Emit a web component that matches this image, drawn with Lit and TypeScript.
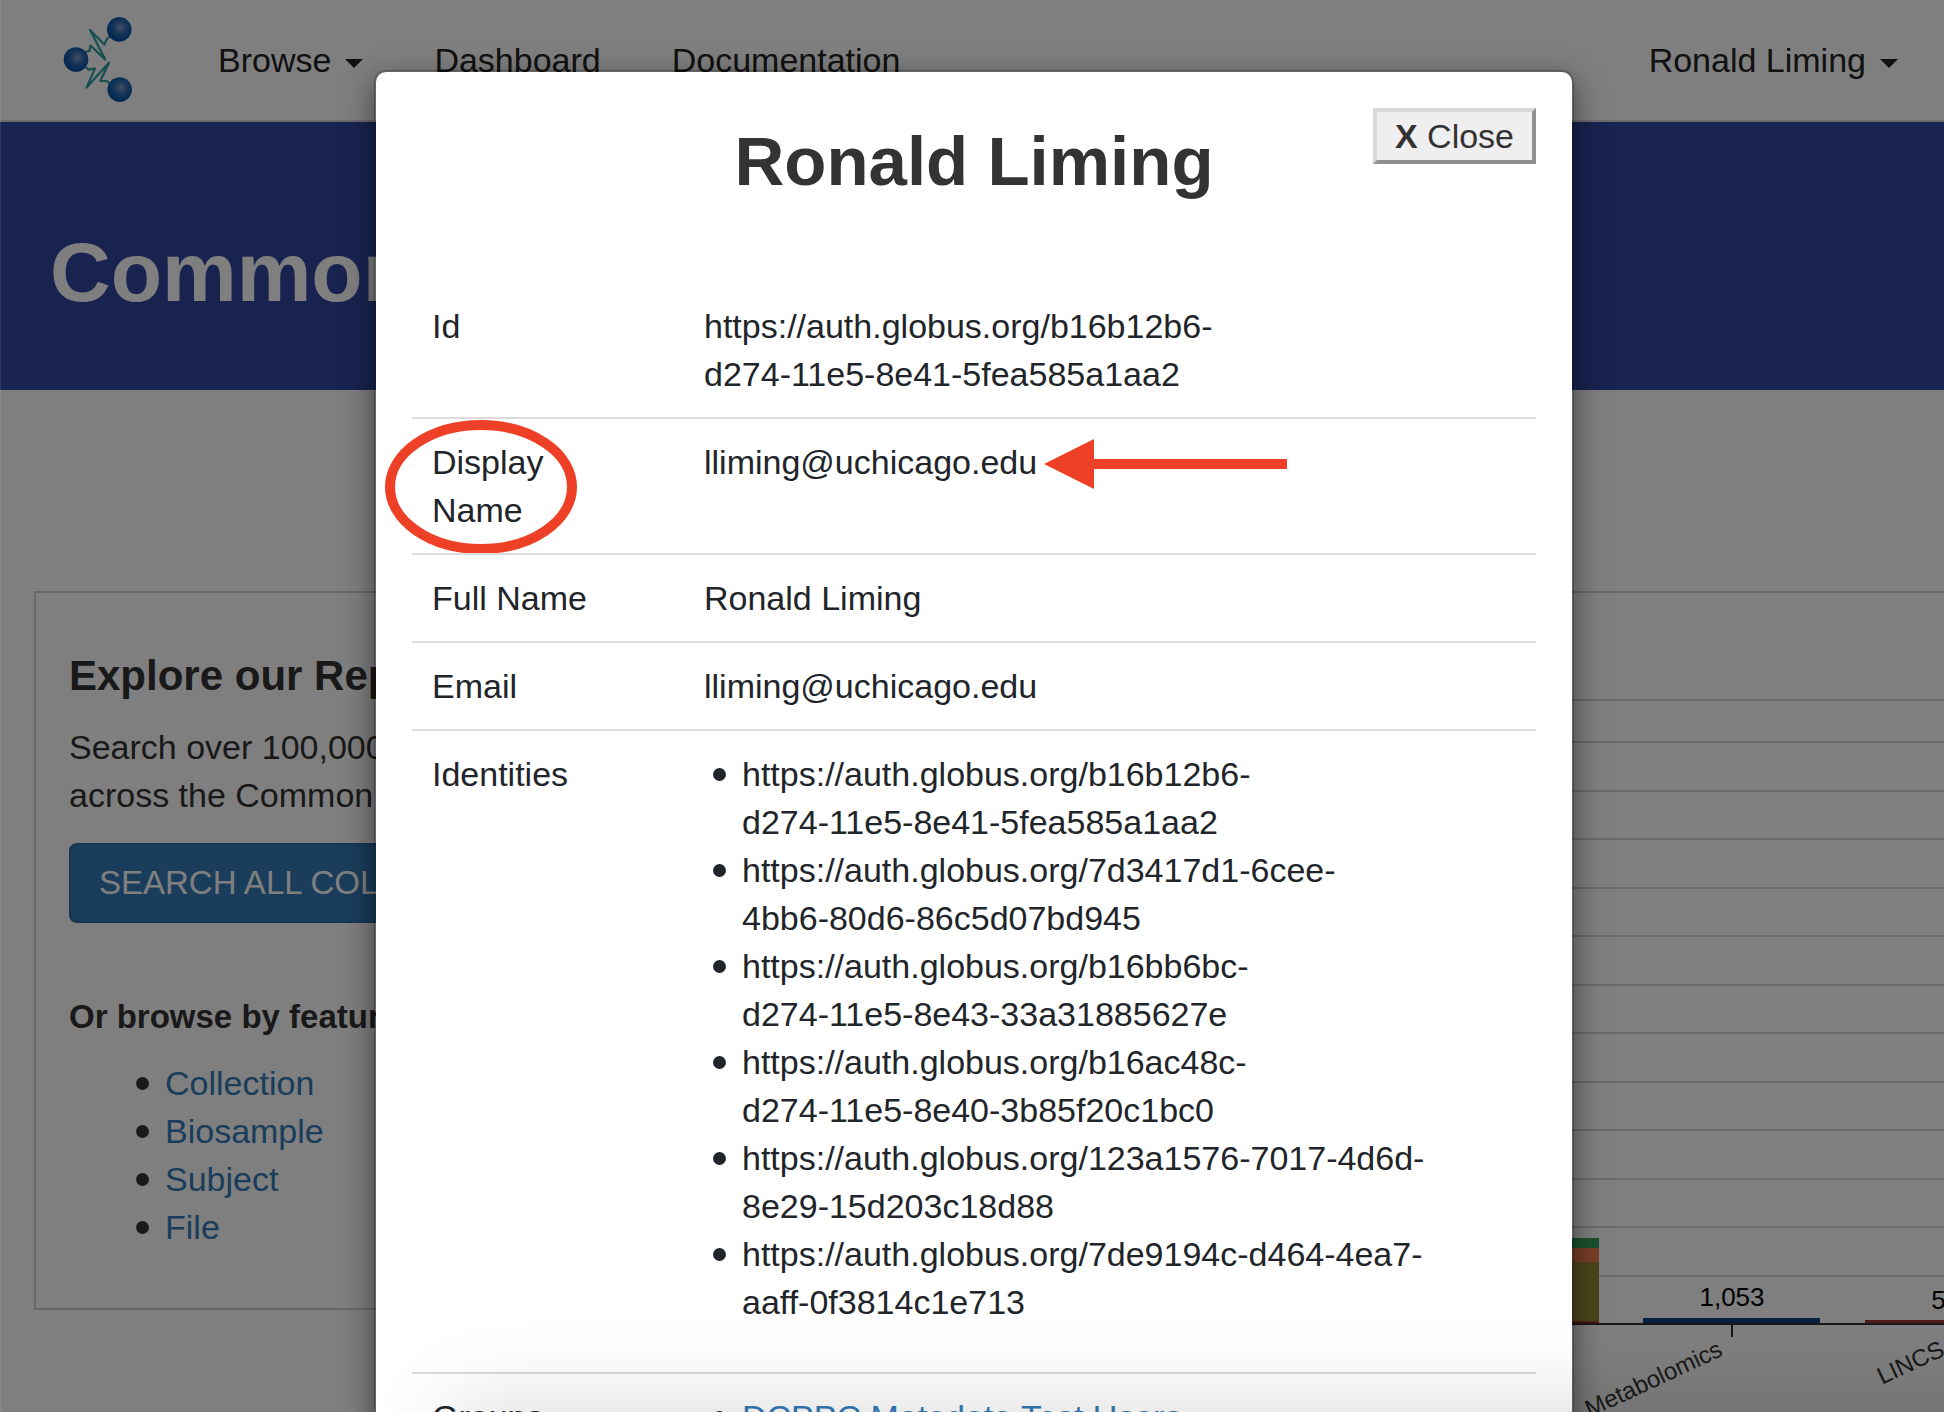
import { LitElement, html, svg, css } from "lit";
import { customElement } from "lit/decorators.js";

const GRID_LINES = [700, 742, 791, 839, 888, 936, 985, 1033, 1082, 1130, 1179, 1227, 1276];

// Each identity URL is shown on two lines, split after the second part.
const IDENTITIES = [
  ["https://auth.globus.org/b16b12b6-", "d274-11e5-8e41-5fea585a1aa2"],
  ["https://auth.globus.org/7d3417d1-6cee-", "4bb6-80d6-86c5d07bd945"],
  ["https://auth.globus.org/b16bb6bc-", "d274-11e5-8e43-33a31885627e"],
  ["https://auth.globus.org/b16ac48c-", "d274-11e5-8e40-3b85f20c1bc0"],
  ["https://auth.globus.org/123a1576-7017-4d6d-", "8e29-15d203c18d88"],
  ["https://auth.globus.org/7de9194c-d464-4ea7-", "aaff-0f3814c1e713"],
];

const FEATURES = ["Collection", "Biosample", "Subject", "File"];

const bulletStyles = css`
  .list {
    list-style: none;
    margin: 0;
    padding: 0;
  }
  .entry {
    display: flex;
    gap: 16px;
  }
  .entry::before {
    content: "";
    flex: none;
    width: 13px;
    height: 13px;
    margin-top: 18px;
    border-radius: 50%;
    background: currentColor;
  }
  .link {
    color: #337ab7;
    text-decoration: none;
  }
`;

@customElement("site-nav")
class SiteNav extends LitElement {
  static styles = css`
    :host {
      display: block;
    }
    .bar {
      display: flex;
      align-items: center;
      gap: 71px;
      height: 120px;
      padding: 0 46px 0 60px;
      background: #fff;
      border-bottom: 2px solid #d8d8d8;
    }
    .logo {
      display: block;
      margin-right: 11px;
    }
    .item {
      display: flex;
      align-items: center;
      gap: 14px;
      padding: 0;
      border: 0;
      background: none;
      color: #222;
      font: inherit;
      text-decoration: none;
      cursor: pointer;
    }
    .user {
      margin-left: auto;
    }
    .caret {
      margin-top: 6px;
      border: 9px solid transparent;
      border-top-color: #222;
      border-bottom: 0;
    }
  `;

  render() {
    return html`
      <nav class="bar" aria-label="Main">
        <a class="logo" href="#" aria-label="Home">
          <svg width="76" height="90" viewBox="60 15 76 90" style="display:block">
            <defs>
              <radialGradient id="ball" cx="0.55" cy="0.42" r="0.6">
                <stop offset="0" stop-color="#7f9fc8" />
                <stop offset="0.45" stop-color="#2f68ad" />
                <stop offset="0.8" stop-color="#0c57a8" />
                <stop offset="1" stop-color="#084a92" />
              </radialGradient>
            </defs>
            <g fill="none" stroke="#2f9ca0" stroke-width="2.2" stroke-linejoin="round" stroke-linecap="round">
              <path d="M86 52 L89.5 50.7 L90.5 45.5 L105.3 59.6 L90 30 L104.3 44.6 L106.8 39 L110 36.6" />
              <path d="M86.3 67.6 L88.6 69.6 L95 68.4 L86.6 87.6 L109 62.7 L100.3 81 L106.6 81 L109.5 83.4" />
            </g>
            <circle cx="119.3" cy="29.4" r="12.3" fill="url(#ball)" />
            <circle cx="76" cy="59.5" r="12.3" fill="url(#ball)" />
            <circle cx="119.7" cy="89.6" r="12.3" fill="url(#ball)" />
          </svg>
        </a>
        <button class="item" type="button">Browse <span class="caret"></span></button>
        <a class="item" href="#">Dashboard</a>
        <a class="item" href="#">Documentation</a>
        <button class="item user" type="button">Ronald Liming <span class="caret"></span></button>
      </nav>
    `;
  }
}

@customElement("explore-card")
class ExploreCard extends LitElement {
  static styles = [
    bulletStyles,
    css`
      :host {
        display: block;
      }
      .card {
        padding: 59px 33px 57px;
        border: 2px solid #d0d0d0;
        color: #333;
      }
      .heading {
        margin: 0 0 23px;
        font-size: 42px;
        line-height: 48px;
        white-space: nowrap;
      }
      .text {
        margin: 0 0 24px;
      }
      .search {
        display: inline-block;
        padding: 14px 28px;
        border: 2px solid #2e6da4;
        border-radius: 8px;
        background: #337ab7;
        color: #fff;
        font-size: 33px;
        line-height: 48px;
        text-decoration: none;
        white-space: nowrap;
      }
      .subheading {
        margin: 70px 0 18px;
        font-size: 33px;
        line-height: 48px;
        white-space: nowrap;
      }
      .features {
        padding-left: 67px;
      }
    `,
  ];

  render() {
    return html`
      <section class="card">
        <h2 class="heading">Explore our Repository</h2>
        <p class="text">Search over 100,000 files<br />across the Common Fund</p>
        <a class="search" href="#">SEARCH ALL COLLECTIONS</a>
        <h3 class="subheading">Or browse by feature:</h3>
        <ul class="list features">
          ${FEATURES.map((name) => html`<li class="entry"><a class="link" href="#">${name}</a></li>`)}
        </ul>
      </section>
    `;
  }
}

@customElement("summary-chart")
class SummaryChart extends LitElement {
  static styles = css`
    :host {
      display: flex;
      justify-content: flex-end;
      border: 2px solid #d0d0d0;
      border-right: 0;
      overflow: hidden;
    }
    .plot {
      display: block;
      flex: none;
    }
    .grid {
      stroke: #d4d4d4;
      stroke-width: 2;
    }
    .axis {
      stroke: #333;
      stroke-width: 2;
    }
    .value {
      fill: #000;
      font-size: 26px;
      text-anchor: middle;
    }
    .name {
      fill: #333;
      font-size: 24px;
      text-anchor: end;
    }
  `;

  render() {
    return html`
      <svg class="plot" width="600" height="860" viewBox="1344 593 600 860" role="img" aria-label="Counts by program">
        ${GRID_LINES.map((y) => svg`<line class="grid" x1="1344" x2="1944" y1=${y} y2=${y} />`)}
        <rect x="1424" y="1238" width="175" height="10" fill="#32a25a" />
        <rect x="1424" y="1248" width="175" height="14" fill="#f07c50" />
        <rect x="1424" y="1262" width="175" height="59" fill="#988a34" />
        <rect x="1424" y="1321" width="175" height="3" fill="#a03030" />
        <rect x="1643" y="1318" width="177" height="6" fill="#0a4080" />
        <rect x="1865" y="1320" width="177" height="4" fill="#a83232" />
        <line class="axis" x1="1344" x2="1944" y1="1324" y2="1324" />
        <line class="axis" x1="1732" x2="1732" y1="1324" y2="1337" />
        <text class="value" x="1732" y="1306">1,053</text>
        <text class="value" x="1953" y="1309">569</text>
        <text class="name" transform="translate(1724 1355) rotate(-25)">Metabolomics</text>
        <text class="name" transform="translate(1946 1355) rotate(-25)">LINCS</text>
      </svg>
    `;
  }
}

@customElement("profile-dialog")
class ProfileDialog extends LitElement {
  static styles = [
    bulletStyles,
    css`
      :host {
        display: block;
      }
      .dialog {
        box-sizing: border-box;
        width: 100%;
        padding: 36px;
        border: 2px solid rgba(0, 0, 0, 0.2);
        border-radius: 12px;
        background: #fff;
        background-clip: padding-box;
        box-shadow: 0 10px 30px rgba(0, 0, 0, 0.5);
        color: #212529;
      }
      .header {
        display: grid;
        grid-template-columns: 1fr auto 1fr;
        margin-bottom: 81px;
        color: #333;
      }
      .title {
        grid-column: 2;
        margin: 14px 0 0;
        font-size: 69px;
        line-height: 80px;
      }
      .close {
        align-self: start;
        justify-self: end;
        padding: 0 18px;
        border: 4px solid;
        border-color: #d8d8d8 #909090 #909090 #d8d8d8;
        background: #efefef;
        color: #333;
        font: inherit;
        font-size: 34px;
        line-height: 48px;
      }
      .fields {
        width: 100%;
        border-collapse: separate;
        border-spacing: 0;
        table-layout: fixed;
      }
      .label,
      .value {
        position: relative;
        padding: 19px 20px;
        border-top: 2px solid #dcdcdc;
        font-weight: normal;
        text-align: left;
        vertical-align: top;
      }
      .label {
        width: 172px;
        padding-right: 80px;
      }
      .first > .label,
      .first > .value {
        border-top: 0;
      }
      .entries {
        margin-bottom: 27px;
        padding-left: 9px;
      }
      .mark {
        position: absolute;
        pointer-events: none;
      }
      .oval {
        top: 0;
        left: -28px;
      }
      .arrow {
        top: 20px;
        left: 360px;
      }
    `,
  ];

  render() {
    return html`
      <div class="dialog" role="dialog" aria-labelledby="title">
        <div class="header">
          <h1 class="title" id="title">Ronald Liming</h1>
          <button class="close" type="button"><b>X</b> Close</button>
        </div>
        <table class="fields">
          <tr class="first">
            <th class="label" scope="row">Id</th>
            <td class="value">${IDENTITIES[0][0]}<br />${IDENTITIES[0][1]}</td>
          </tr>
          <tr>
            <th class="label" scope="row">
              Display Name
              <svg class="mark oval" width="194" height="136" viewBox="0 0 194 136">
                <ellipse cx="97" cy="68" rx="91" ry="62" fill="none" stroke="#ee4026" stroke-width="10" />
              </svg>
            </th>
            <td class="value">
              lliming@uchicago.edu
              <svg class="mark arrow" width="244" height="50" viewBox="0 0 244 50">
                <path d="M0 25 L50 0 V20 H243 V30 H50 V50 Z" fill="#ee4026" />
              </svg>
            </td>
          </tr>
          <tr>
            <th class="label" scope="row">Full Name</th>
            <td class="value">Ronald Liming</td>
          </tr>
          <tr>
            <th class="label" scope="row">Email</th>
            <td class="value">lliming@uchicago.edu</td>
          </tr>
          <tr>
            <th class="label" scope="row">Identities</th>
            <td class="value">
              <ul class="list entries">
                ${IDENTITIES.map(
                  ([start, end]) => html`<li class="entry"><span>${start}<br />${end}</span></li>`,
                )}
              </ul>
            </td>
          </tr>
          <tr>
            <th class="label" scope="row">Groups</th>
            <td class="value">
              <ul class="list entries">
                <li class="entry"><a class="link" href="#">DCPPC Metadata Test Users</a></li>
              </ul>
            </td>
          </tr>
        </table>
      </div>
    `;
  }
}

@customElement("app-root")
class AppRoot extends LitElement {
  static styles = css`
    :host {
      display: block;
      font-family: "Liberation Sans", Arial, sans-serif;
      font-size: 34px;
      line-height: 48px;
    }
    .screen {
      position: relative;
      height: 100vh;
      overflow: hidden;
      background: #fff;
    }
    .banner {
      box-sizing: border-box;
      height: 268px;
      padding: 102px 50px 0;
      background: #3246a0;
    }
    .banner-title {
      margin: 0;
      color: #fff;
      font-size: 84px;
      line-height: 96px;
      white-space: nowrap;
    }
    .content {
      display: grid;
      grid-template-columns: 1fr 2fr;
      align-items: start;
      gap: 34px;
      padding: 201px 0 0 34px;
    }
    .backdrop {
      position: absolute;
      inset: 0;
      padding: 70px 0 0 4px;
      background: rgba(0, 0, 0, 0.5);
      box-shadow: inset 1px 0 rgba(255, 255, 255, 0.1);
    }
    .modal {
      max-width: 1200px;
      margin: 0 auto;
    }
    .bottom-shade {
      position: absolute;
      top: 100%;
      left: 450px;
      right: -200px;
      height: 200px;
      box-shadow: 0 -8px 90px rgba(0, 0, 0, 0.14);
    }
  `;

  render() {
    return html`
      <div class="screen">
        <site-nav></site-nav>
        <header class="banner"><h1 class="banner-title">Common Fund Data</h1></header>
        <main class="content">
          <explore-card></explore-card>
          <summary-chart></summary-chart>
        </main>
        <div class="backdrop"><profile-dialog class="modal"></profile-dialog></div>
        <div class="bottom-shade"></div>
      </div>
    `;
  }
}
